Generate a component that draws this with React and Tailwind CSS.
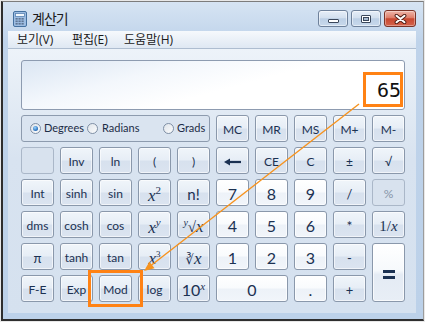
import React from "react";

const BASE =
  "flex items-center justify-center rounded-[3px] border pt-[3px] leading-none text-[#1b3152] font-['Lato',sans-serif]";
const FN =
  BASE +
  " border-[#8a98ab] bg-[linear-gradient(to_bottom,#f0f5fa_0%,#e7eef6_46%,#d7e1ee_54%,#dbe4f0_100%)] shadow-[inset_0_0_0_1px_rgba(255,255,255,0.6)] text-[12px]";
const DIG =
  BASE +
  " border-[#8a98ab] bg-[linear-gradient(to_bottom,#ffffff_0%,#f9fbfd_46%,#edf2f8_54%,#f1f5fa_100%)] shadow-[inset_0_0_0_1px_rgba(255,255,255,0.7)] text-[16px]";
const DIS =
  BASE + " border-[#aab7c8] bg-[#d8e2ee] text-[12px] text-[#8795a8]";

const SERIF = "font-['Liberation_Serif','DejaVu_Sans',serif]";

function Radio({ checked }) {
  return (
    <span className="w-[11px] h-[11px] shrink-0 rounded-full border border-[#7f8fa5] bg-[linear-gradient(135deg,#dfe4ea,#fbfcfd)] flex items-center justify-center">
      {checked && (
        <span className="w-[5px] h-[5px] rounded-full bg-[radial-gradient(circle_at_40%_35%,#9ad6ff,#1d63b4_75%)]" />
      )}
    </span>
  );
}

function CalcIcon() {
  return (
    <svg width="14" height="16" viewBox="0 0 14 16" className="shrink-0">
      <rect x="0.5" y="0.5" width="13" height="15" rx="1.5" fill="#9dbde2" stroke="#44709f" />
      <rect x="2.5" y="2.5" width="9" height="3" fill="#f2f8fd" stroke="#5b84b3" strokeWidth="0.8" />
      {[7, 9.5, 12].map((y) =>
        [2.5, 5.5, 8.5].map((x) => (
          <rect key={x + "-" + y} x={x} y={y} width="2.2" height="1.6" fill="#5e7593" />
        ))
      )}
    </svg>
  );
}

function Arrow() {
  return (
    <svg width="17" height="8" viewBox="0 0 17 8">
      <path d="M5 4 L17 4" stroke="#1b3152" strokeWidth="2.2" />
      <path d="M0 4 L6 0.5 L6 7.5 Z" fill="#1b3152" />
    </svg>
  );
}

export default function App() {
  return (
    <div className="relative w-[425px] h-[322px] bg-[#e8e8e8] overflow-hidden font-['Lato','Noto_Sans_CJK_KR',sans-serif]">
      <div className="ml-[1px] mt-[1px] w-[423px] h-[320px] border-l-2 border-b-2 border-t border-r border-l-[#2e2e2e] border-b-[#2e2e2e] border-t-[#7c7c7c] border-r-[#9c9c9c] bg-[linear-gradient(to_bottom,#d6e4f3_0px,#bfd3ea_40px,#bcd1e9_100%)] pl-[5px] pr-[7px] flex flex-col">
        {/* title bar */}
        <div className="h-[29px] shrink-0 flex items-center pt-[4px]">
          <span className="ml-[5px] flex">
            <CalcIcon />
          </span>
          <span className="ml-[5px] text-[14px] tracking-[-1px] text-[#1a1a1a] font-['Noto_Sans_CJK_KR',sans-serif]">
            계산기
          </span>
          <div className="ml-auto flex gap-[3px]">
            <div className="w-[30px] h-[17px] rounded-[3px] border border-[#6e819b] bg-[linear-gradient(to_bottom,#e6eef8_0%,#d3e0ef_45%,#bccfe5_52%,#c8d9ec_100%)] shadow-[inset_0_0_0_1px_rgba(255,255,255,0.5)] flex items-end justify-center pb-[3px]">
              <div className="w-[11px] h-[4px] bg-white border border-[#3a475b] rounded-[1px]" />
            </div>
            <div className="w-[30px] h-[17px] rounded-[3px] border border-[#6e819b] bg-[linear-gradient(to_bottom,#e6eef8_0%,#d3e0ef_45%,#bccfe5_52%,#c8d9ec_100%)] shadow-[inset_0_0_0_1px_rgba(255,255,255,0.5)] flex items-center justify-center">
              <div className="w-[10px] h-[8px] border border-[#3a475b] bg-white p-[1px] rounded-[1px]">
                <div className="w-full h-full border border-[#3a475b] bg-[#a9bcd2]" />
              </div>
            </div>
            <div className="w-[32px] h-[17px] rounded-[3px] border border-[#7a3327] bg-[linear-gradient(to_bottom,#efb6a9_0%,#de7e6a_45%,#c8472f_52%,#d4644d_100%)] shadow-[inset_0_0_0_1px_rgba(255,255,255,0.35)] flex items-center justify-center">
              <svg width="13" height="10" viewBox="0 0 13 10">
                <path d="M2.5 1.8 L10.5 8.2 M10.5 1.8 L2.5 8.2" stroke="#4b1a12" strokeWidth="3.8" strokeLinecap="round" />
                <path d="M2.5 1.8 L10.5 8.2 M10.5 1.8 L2.5 8.2" stroke="#ffffff" strokeWidth="2.1" strokeLinecap="round" />
              </svg>
            </div>
          </div>
        </div>

        {/* menu bar */}
        <div className="h-[18px] shrink-0 border-b border-[#aebdd0] bg-[linear-gradient(to_bottom,#f6f9fc,#dfe8f3)] flex items-center text-[12px] text-[#1a1a1a] font-['Open_Sans','Noto_Sans_CJK_KR',sans-serif]">
          <span className="ml-[9px] w-[55px]">보기(V)</span>
          <span className="w-[52px]">편집(E)</span>
          <span>도움말(H)</span>
        </div>

        {/* client */}
        <div className="h-[264px] shrink-0 bg-[linear-gradient(to_bottom,#edf3f9_0px,#d8e3f0_110px,#d5e1ef_100%)] pt-[11px] pl-[13px] pr-[11px]">
          <div className="h-[50px] mb-[5px] rounded-[3px] border border-[#8d9bb0] bg-[linear-gradient(165deg,#dbe6f3_0%,#f3f7fc_30%,#ffffff_55%)] flex items-end justify-end pr-[3px] pb-[9px]">
            <span className="text-[20px] leading-none text-[#111] font-['DejaVu_Sans_Mono',monospace]">65</span>
          </div>

          <div className="grid grid-cols-[repeat(10,33px)] auto-rows-[27px] gap-x-[6px] gap-y-[5px]">
            <div className="col-span-5 rounded-[3px] border border-[#8d9bae] bg-[#dae4f0] flex items-center pl-[8px] text-[11px] text-[#1c2c46] font-['Lato',sans-serif]">
              <span className="w-[57px] flex items-center gap-[3px]">
                <Radio checked />
                <span>Degrees</span>
              </span>
              <span className="w-[76px] flex items-center gap-[4px]">
                <Radio />
                <span>Radians</span>
              </span>
              <span className="flex items-center gap-[3px]">
                <Radio />
                <span>Grads</span>
              </span>
            </div>
            <div className={FN}>MC</div>
            <div className={FN}>MR</div>
            <div className={FN}>MS</div>
            <div className={FN}>M+</div>
            <div className={FN}>M-</div>

            {/* row 1 */}
            <div className={DIS}></div>
            <div className={FN}>Inv</div>
            <div className={FN}>ln</div>
            <div className={FN}>(</div>
            <div className={FN}>)</div>
            <div className={FN + " pt-[1px]"}>
              <Arrow />
            </div>
            <div className={FN}>CE</div>
            <div className={FN}>C</div>
            <div className={FN}>±</div>
            <div className={FN}>√</div>

            {/* row 2 */}
            <div className={FN}>Int</div>
            <div className={FN}>sinh</div>
            <div className={FN}>sin</div>
            <div className={FN}>
              <span className={SERIF + " text-[17px]"}>
                <i>x</i>
                <span className="align-super text-[11px]">2</span>
              </span>
            </div>
            <div className={FN}>
              <span className="text-[15px]">n!</span>
            </div>
            <div className={DIG}>7</div>
            <div className={DIG}>8</div>
            <div className={DIG}>9</div>
            <div className={FN}>
              <span className="text-[13px]">/</span>
            </div>
            <div className={DIS + " text-[#5d6d84]"}>%</div>

            {/* row 3 */}
            <div className={FN}>dms</div>
            <div className={FN}>cosh</div>
            <div className={FN}>cos</div>
            <div className={FN}>
              <span className={SERIF + " text-[17px]"}>
                <i>x</i>
                <i className="align-super text-[11px]">y</i>
              </span>
            </div>
            <div className={FN}>
              <span className={SERIF + " text-[15px]"}>
                <i className="align-super text-[10px]">y</i>
                <span>√</span>
                <i className="text-[17px]">x</i>
              </span>
            </div>
            <div className={DIG}>4</div>
            <div className={DIG}>5</div>
            <div className={DIG}>6</div>
            <div className={FN}>
              <span className="text-[14px]">*</span>
            </div>
            <div className={FN}>
              <span className={SERIF + " text-[15px]"}>
                1/<i>x</i>
              </span>
            </div>

            {/* row 4 */}
            <div className={FN}>
              <span className="text-[13px]">π</span>
            </div>
            <div className={FN}>tanh</div>
            <div className={FN}>tan</div>
            <div className={FN}>
              <span className={SERIF + " text-[17px]"}>
                <i>x</i>
                <span className="align-super text-[9px]">3</span>
              </span>
            </div>
            <div className={FN}>
              <span className={SERIF + " text-[15px]"}>
                <span className="font-['DejaVu_Sans',sans-serif] text-[13px]">∛</span>
                <i className="text-[17px]">x</i>
              </span>
            </div>
            <div className={DIG}>1</div>
            <div className={DIG}>2</div>
            <div className={DIG}>3</div>
            <div className={FN}>
              <span className="text-[13px]">-</span>
            </div>
            <div className={"row-span-2 " + BASE + " border-[#8a98ab] bg-[linear-gradient(to_bottom,#ffffff_0%,#f6f9fc_46%,#e4ebf4_54%,#e8eef6_100%)] shadow-[inset_0_0_0_1px_rgba(255,255,255,0.7)] flex-col gap-[3px] pt-[0px]"}>
              <div className="w-[12px] h-[3px] bg-[#1b3152]" />
              <div className="w-[12px] h-[3px] bg-[#1b3152]" />
            </div>

            {/* row 5 */}
            <div className={FN}>F-E</div>
            <div className={FN}>Exp</div>
            <div className={FN}>Mod</div>
            <div className={FN}>log</div>
            <div className={FN}>
              <span className="text-[16px]">
                10
                <i className={SERIF + " align-super text-[11px]"}>x</i>
              </span>
            </div>
            <div className={"col-span-2 " + DIG}>0</div>
            <div className={DIG}>.</div>
            <div className={FN}>
              <span className="text-[13px]">+</span>
            </div>
          </div>
        </div>
      </div>

      {/* annotations */}
      <div className="absolute left-[363px] top-[72px] w-[40px] h-[35px] border-[3px] border-[#ff8214]" />
      <div className="absolute left-[88px] top-[270px] w-[55px] h-[37px] border-[3px] border-[#ff8214]" />
      <svg className="absolute left-0 top-0 pointer-events-none" width="425" height="322" viewBox="0 0 425 322">
        <line x1="359" y1="104" x2="151" y2="265.5" stroke="#f7931e" strokeWidth="1.4" />
        <polygon points="144,271 154.6,268.3 149.4,261.7" fill="#f7931e" />
      </svg>
    </div>
  );
}
